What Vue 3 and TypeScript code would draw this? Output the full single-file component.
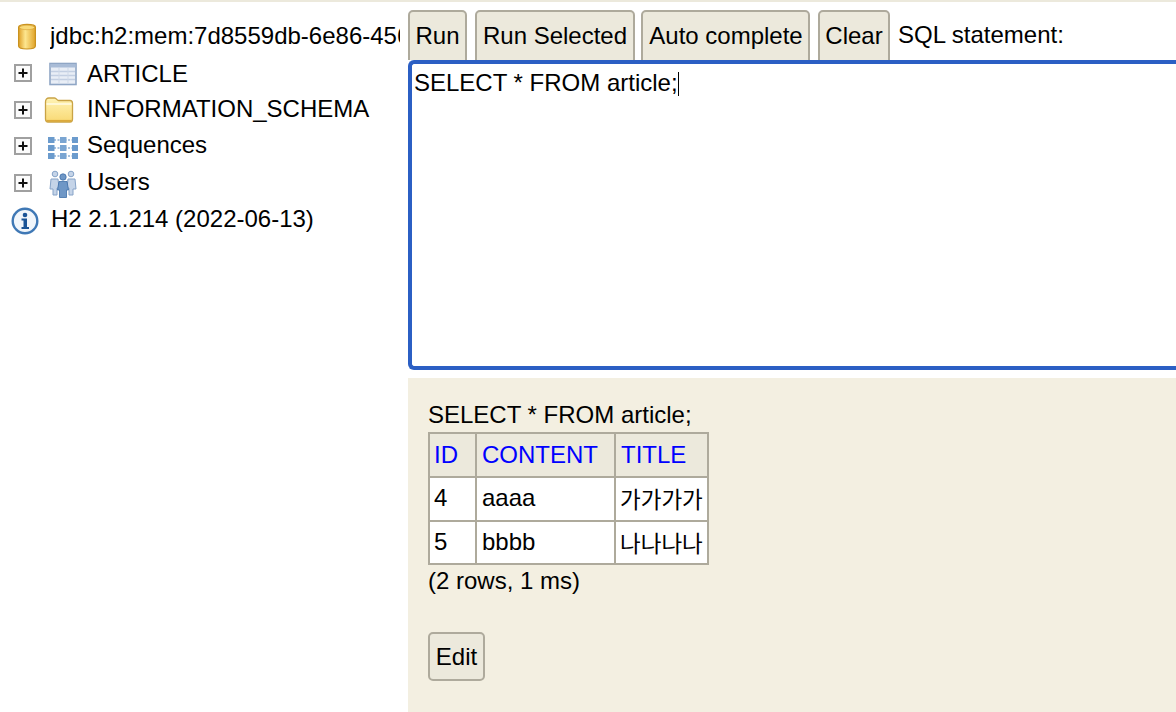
<template>
  <div class="console">
    <div class="top-strip"></div>
    <div class="main">
      <!-- left tree -->
      <div class="tree">
        <div class="tree-row db-row">
          <svg class="db-icon" width="20" height="28" viewBox="0 0 20 28">
            <defs>
              <linearGradient id="dbFill" x1="0" x2="1" y1="0" y2="0">
                <stop offset="0" stop-color="#dfa028" />
                <stop offset="0.4" stop-color="#fde68f" />
                <stop offset="1" stop-color="#e0a329" />
              </linearGradient>
            </defs>
            <path d="M1.600 5C1.600 1.500 18.400 1.500 18.400 5V24C18.400 28 1.600 28 1.600 24Z" fill="url(#dbFill)" stroke="#c9921f" stroke-width="1.200" />
            <ellipse cx="10" cy="5.500" rx="7.500" ry="2.200" fill="#f9da78" stroke="#d6a135" stroke-width="0.600" />
          </svg>
          <span class="db-name">jdbc:h2:mem:7d8559db-6e86-456</span>
        </div>

        <div v-for="node in nodes" :key="node.label" class="tree-row" :class="node.kind">
          <svg class="plus" width="18" height="18" viewBox="0 0 18 18">
            <rect x="1" y="1" width="16" height="16" fill="#fbfbfb" stroke="#a0a0a0" stroke-width="2" />
            <path d="M4.500 9H13.500M9 4.500V13.500" stroke="#111" stroke-width="2" />
          </svg>

          <svg v-if="node.kind === 'table'" class="node-icon" width="28" height="24" viewBox="0 0 28 24">
            <rect x="1" y="1.500" width="26" height="21" fill="#e9eef6" stroke="#8fa6c5" stroke-width="1.600" />
            <rect x="1.500" y="2" width="25" height="3.500" fill="#a9bcd7" />
            <path d="M2 9.500H26M2 13.500H26M2 17.500H26" stroke="#c3cfe2" stroke-width="1.400" />
            <path d="M10 6V22M19 6V22" stroke="#cfd9e8" stroke-width="1" />
          </svg>

          <svg v-else-if="node.kind === 'folder'" class="node-icon" width="30" height="28" viewBox="0 0 30 28">
            <defs>
              <linearGradient id="folderFill" x1="0" x2="0" y1="0" y2="1">
                <stop offset="0" stop-color="#fff3b5" />
                <stop offset="1" stop-color="#f9d974" />
              </linearGradient>
            </defs>
            <path d="M1.500 7C1.500 4 3 3 5 3H10.500C12.500 3 13 5.500 14.500 5.500H26C28 5.500 28.500 6.500 28.500 8.500V24C28.500 26 27.500 27 26 27H4C2.500 27 1.500 26 1.500 24Z" fill="url(#folderFill)" stroke="#c9a345" stroke-width="1.300" />
            <path d="M2.500 9H27.500" stroke="#fffbe2" stroke-width="1.600" />
            <path d="M2.500 25.800H27.500" stroke="#dba93c" stroke-width="1.800" />
          </svg>

          <svg v-else-if="node.kind === 'seq'" class="node-icon" width="30" height="22" viewBox="0 0 30 22">
            <g v-for="r in [0, 1, 2]" :key="r">
              <path :d="`M6 ${3 + r * 8}H25`" stroke="#8fb0d4" stroke-width="1.400" stroke-dasharray="2 1.500" />
              <rect x="0" :y="r * 8" width="6.500" height="6" fill="#6b9bcd" />
              <rect x="12" :y="r * 8" width="6.500" height="6" fill="#7aa5d2" />
              <rect x="24" :y="r * 8" width="6" height="6" fill="#6b9bcd" />
            </g>
          </svg>

          <svg v-else class="node-icon" width="30" height="28" viewBox="0 0 30 28">
            <g fill="#c5d4e8" stroke="#86a3c8" stroke-width="1">
              <circle cx="7" cy="4" r="2.800" />
              <circle cx="23" cy="4" r="2.800" />
              <path d="M3 9H10L11 18H9V25H5V19H2Z" />
              <path d="M20 9H27L28 19H25V25H21V18H19Z" />
            </g>
            <circle cx="15" cy="7" r="3.200" fill="#6f97c6" stroke="#3f6ea8" stroke-width="0.800" />
            <path d="M11 11.500H19L20.500 20H18.500V27.500H11.500V20H9.500Z" fill="#6f97c6" stroke="#3f6ea8" stroke-width="0.800" />
          </svg>

          <span class="node-label">{{ node.label }}</span>
        </div>

        <div class="tree-row info-row">
          <svg class="info-icon" width="28" height="28" viewBox="0 0 28 28">
            <circle cx="14" cy="14" r="12.300" fill="#f1f6fb" stroke="#3f78b5" stroke-width="2.400" />
            <circle cx="14" cy="8" r="2.300" fill="#1a5497" />
            <path d="M10.500 11.500H16V20H18V22H10.500V20H12.500V13.500H10.500Z" fill="#1a5497" />
          </svg>
          <span>H2 2.1.214 (2022-06-13)</span>
        </div>
      </div>

      <!-- right side -->
      <div class="work">
        <div class="toolbar">
          <button v-for="b in toolbarButtons" :key="b" class="btn tool-btn">{{ b }}</button>
          <span class="sql-label">SQL statement:</span>
        </div>

        <div class="editor">
          <span>SELECT * FROM article;</span><span class="caret"></span>
        </div>

        <div class="result">
          <div class="result-sql">SELECT * FROM article;</div>
          <table class="grid">
            <thead>
              <tr>
                <th v-for="c in columns" :key="c">{{ c }}</th>
              </tr>
            </thead>
            <tbody>
              <tr v-for="row in rows" :key="row.id">
                <td>{{ row.id }}</td>
                <td>{{ row.content }}</td>
                <td><span class="hangul">{{ row.title }}</span></td>
              </tr>
            </tbody>
          </table>
          <div class="row-count">(2 rows, 1 ms)</div>
          <button class="btn edit-btn">Edit</button>
        </div>
      </div>
    </div>
  </div>
</template>

<script setup lang="ts">
const nodes = [
  { label: 'ARTICLE', kind: 'table' },
  { label: 'INFORMATION_SCHEMA', kind: 'folder' },
  { label: 'Sequences', kind: 'seq' },
  { label: 'Users', kind: 'users' }
]

const toolbarButtons = ['Run', 'Run Selected', 'Auto complete', 'Clear']

const columns = ['ID', 'CONTENT', 'TITLE']

const rows = [
  { id: 4, content: 'aaaa', title: '가가가가' },
  { id: 5, content: 'bbbb', title: '나나나나' }
]
</script>

<style>
html,
body {
  margin: 0;
  background: #fff;
  overflow: hidden;
}
</style>

<style scoped>
.console {
  width: 1176px;
  height: 712px;
  overflow: hidden;
  font-family: "Liberation Sans", Arial, "Noto Sans CJK KR", sans-serif;
  font-size: 24px;
  color: #000;
}

.top-strip {
  height: 2px;
  background: #ece9dc;
}

.main {
  display: flex;
  height: 710px;
}

.tree {
  width: 408px;
  flex-shrink: 0;
  box-sizing: border-box;
  padding: 15px 8px 0 0;
  overflow: hidden;
}

.tree-row {
  display: flex;
  align-items: center;
  white-space: nowrap;
}

.db-row {
  height: 38px;
  margin-bottom: 1px;
  padding-left: 17px;
  gap: 13px;
}

.db-icon {
  flex-shrink: 0;
}

.db-name {
  flex: 1;
  min-width: 0;
  overflow: hidden;
}

.plus {
  flex-shrink: 0;
  margin-left: 14px;
}

.node-icon {
  flex-shrink: 0;
}

.table {
  height: 36px;
}

.folder {
  height: 34px;
}

.seq {
  height: 38px;
}

.users {
  height: 36px;
}

.table .plus {
  margin-bottom: 2px;
}

.folder .plus,
.seq .plus,
.users .plus {
  margin-top: 2px;
}

.table .node-icon {
  margin-left: 17px;
  margin-right: 10px;
}

.folder .node-icon {
  margin-left: 12px;
  margin-right: 13px;
}

.seq .node-icon {
  margin: 6px 9px 0 16px;
}

.users .node-icon {
  margin: 3px 9px 0 16px;
}

.info-row {
  height: 38px;
  padding-left: 11px;
  gap: 12px;
}

.info-icon {
  flex-shrink: 0;
  margin-top: 4px;
}

.work {
  flex: 1;
  min-width: 0;
  display: flex;
  flex-direction: column;
}

.toolbar {
  display: flex;
  align-items: flex-start;
  height: 58px;
  padding-top: 8px;
  box-sizing: border-box;
  overflow: hidden;
  white-space: nowrap;
}

.btn {
  font: inherit;
  color: #000;
  background: #ece9dc;
  border: 2px solid #aeaa9c;
  border-radius: 5px;
  padding: 0;
  box-sizing: border-box;
}

.tool-btn {
  height: 60px;
  line-height: 48px;
  padding-bottom: 12px;
  margin-right: 8px;
  flex-shrink: 0;
}

.tool-btn:nth-child(1) {
  width: 59px;
}

.tool-btn:nth-child(2) {
  width: 160px;
  margin-right: 6px;
}

.tool-btn:nth-child(3) {
  width: 169px;
  padding-left: 1px;
}

.tool-btn:nth-child(4) {
  width: 72px;
}

.sql-label {
  line-height: 50px;
}

.editor {
  height: 310px;
  box-sizing: border-box;
  border: 4px solid #2b5fc4;
  border-right: none;
  border-radius: 6px 0 0 6px;
  padding: 5px 0 0 2px;
  line-height: 27px;
  background: #fff;
  white-space: nowrap;
}

.caret {
  display: inline-block;
  width: 1px;
  height: 24px;
  background: #000;
  vertical-align: -5px;
}

.result {
  flex: 1;
  margin-top: 8px;
  padding: 23px 0 0 20px;
  background: #f3efe1;
}

.result-sql {
  line-height: 28px;
  margin-bottom: 3px;
}

.grid {
  border-collapse: collapse;
  background: #fff;
  table-layout: fixed;
  width: 279px;
}

.grid th,
.grid td {
  border: 2px solid #aeaa9c;
  height: 44px;
  padding: 0 0 2px 5px;
  box-sizing: border-box;
  text-align: left;
  font-weight: normal;
  white-space: nowrap;
  overflow: hidden;
}

.grid th {
  background: #ece9dc;
  color: #0000ff;
  padding-bottom: 0;
}

.grid th:first-child,
.grid td:first-child {
  padding-left: 4px;
}

.grid td:nth-child(3) {
  padding-left: 4px;
}

.grid tr:last-child td {
  height: 43px;
}

.grid th:nth-child(1) {
  width: 47px;
}

.grid th:nth-child(2) {
  width: 139px;
}

.grid th:nth-child(3) {
  width: 93px;
}

.hangul {
  font-size: 22.500px;
}

.row-count {
  line-height: 28px;
  margin-top: 2px;
}

.edit-btn {
  display: block;
  width: 57px;
  height: 49px;
  margin-top: 37px;
}
</style>
